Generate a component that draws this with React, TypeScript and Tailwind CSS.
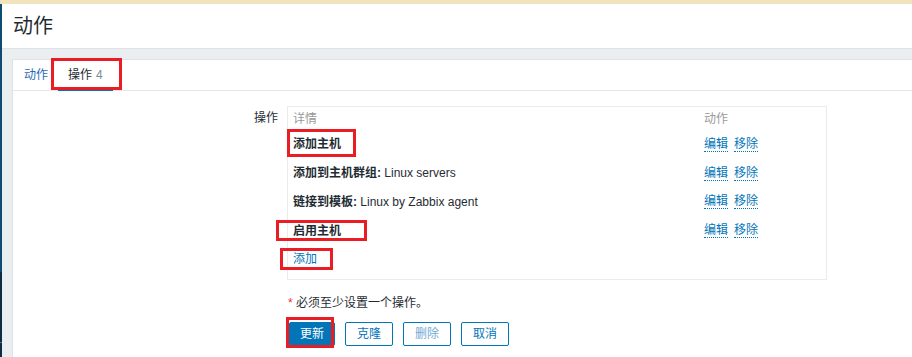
import React from "react";

const font = "font-['Liberation_Sans','Noto_Sans_CJK_SC',sans-serif]";

type Row = { bold: string; rest?: string };

const rows: Row[] = [
  { bold: "添加主机" },
  { bold: "添加到主机群组:", rest: " Linux servers" },
  { bold: "链接到模板:", rest: " Linux by Zabbix agent" },
  { bold: "启用主机" },
];

function ActionLink({ children }: { children: React.ReactNode }) {
  return (
    <span className="border-b border-dotted border-[#0275b8] leading-[14px] text-[#0275b8]">
      {children}
    </span>
  );
}

function RedBox({ className }: { className: string }) {
  return (
    <div
      className={`pointer-events-none absolute border-[3px] border-[#ea1c24] ${className}`}
    />
  );
}

export default function App() {
  return (
    <div
      className={`relative h-[357px] w-[912px] overflow-hidden bg-white text-[12px] text-[#1f2c33] ${font}`}
    >
      <div className="h-[4px] bg-[#f1e3bc]" />
      <div className="flex h-[353px]">
        <div className="flex w-[2px] flex-col">
          <div className="h-[268px] bg-[#0f4a73]" />
          <div className="h-[70px] bg-[#0d2d46]" />
          <div className="h-[1px] bg-[#5d7283]" />
          <div className="flex-1 bg-[#0d2d46]" />
        </div>
        <div className="flex flex-1 flex-col">
          <div className="flex h-[45px] items-center border-b border-[#dfe3e7] pl-[11px]">
            <h1 className="text-[20px] leading-none text-[#1f2c33]">动作</h1>
          </div>
          <div className="flex flex-1 flex-col bg-[#ebeef0] pl-[10px] pt-[10px]">
            <div className="flex-1 border-l border-t border-[#dde2e6] bg-white">
              <div className="flex h-[31px] border-b border-[#e3e7ea] pl-[1px]">
                <div className="flex items-center px-[10px] text-[#1f6bb0]">
                  动作
                </div>
                <div className="-mb-[1px] flex items-center border-b-2 border-[#0275b8] px-[10px]">
                  操作<span className="ml-[4px] text-[#768d99]">4</span>
                </div>
              </div>

              <div className="flex pt-[15px]">
                <div className="w-[265px] pt-[5px] text-right leading-[14px]">
                  操作
                </div>
                <div className="ml-[9px] flex flex-col">
                  <div className="w-[540px] border border-[#ebebeb] px-[5px] pb-[5px]">
                    <div className="flex h-[23px] items-center text-[#999999]">
                      <div className="w-[411px]">详情</div>
                      <div>动作</div>
                    </div>
                    {rows.map((r) => (
                      <div
                        key={r.bold}
                        className="flex h-[28.75px] items-center"
                      >
                        <div className="w-[411px]">
                          <span className="font-bold">{r.bold}</span>
                          {r.rest}
                        </div>
                        <div className="flex gap-[6px]">
                          <ActionLink>编辑</ActionLink>
                          <ActionLink>移除</ActionLink>
                        </div>
                      </div>
                    ))}
                    <div className="flex h-[28.75px] items-center text-[#0275b8]">
                      添加
                    </div>
                  </div>
                  <div className="mt-[16px] pl-[1px] leading-[14px]">
                    <span className="text-[#e33734]">*</span> 必须至少设置一个操作。
                  </div>
                  <div className="mt-[12px] flex gap-[10px] pl-[2px]">
                    <button className="h-[24px] w-[46px] rounded-[2px] border border-[#0275b8] bg-[#0275b8] text-white">
                      更新
                    </button>
                    <button className="h-[24px] w-[48px] rounded-[2px] border border-[#0275b8] bg-white text-[#0275b8]">
                      克隆
                    </button>
                    <button className="h-[24px] w-[48px] rounded-[2px] border border-[#0275b8] bg-white text-[#6fa9d4]">
                      删除
                    </button>
                    <button className="h-[24px] w-[48px] rounded-[2px] border border-[#0275b8] bg-white text-[#0275b8]">
                      取消
                    </button>
                  </div>
                </div>
              </div>
            </div>
          </div>
        </div>
      </div>

      <RedBox className="left-[51px] top-[58px] h-[32px] w-[71px]" />
      <RedBox className="left-[287px] top-[129px] h-[28px] w-[69px]" />
      <RedBox className="left-[276px] top-[220px] h-[21px] w-[91px]" />
      <RedBox className="left-[280px] top-[248px] h-[22px] w-[53px]" />
      <RedBox className="left-[286px] top-[317px] h-[31px] w-[48px]" />
    </div>
  );
}
